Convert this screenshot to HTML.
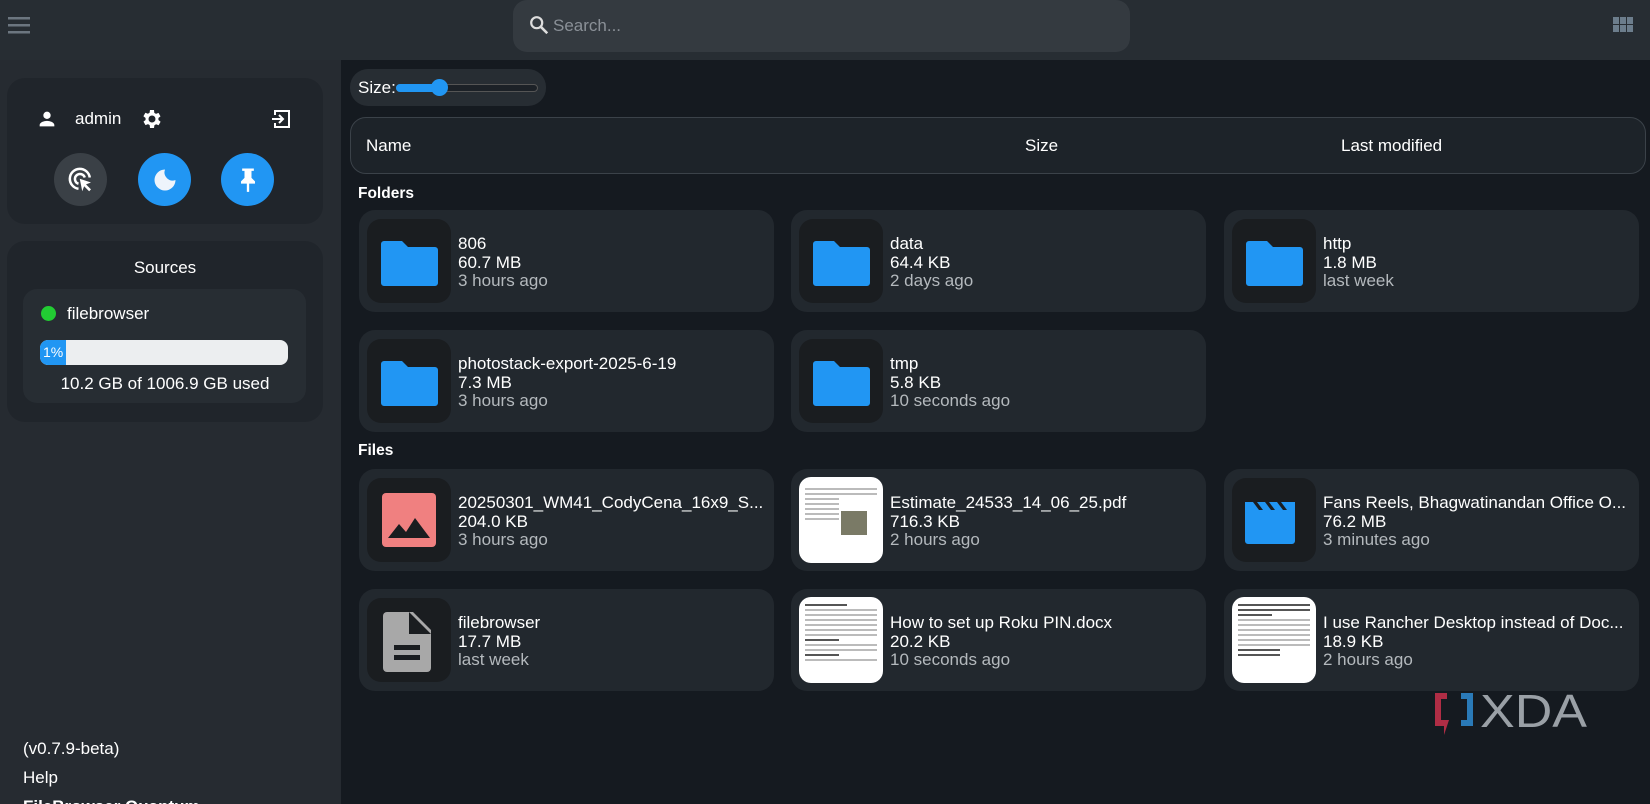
<!DOCTYPE html>
<html style="width:1650px;height:804px;overflow:hidden"><head><meta charset="utf-8"><style>
*{box-sizing:border-box;margin:0;padding:0}
body{width:1650px;height:804px;overflow:hidden;background:#151a20;font-family:"Liberation Sans",sans-serif;color:#fff;position:relative}
.abs{position:absolute}
#hdr{left:0;top:0;width:1650px;height:60px;background:#272d33}
#side{left:0;top:60px;width:341px;height:744px;background:#262b31}
.scard{background:#20252b;border-radius:18px}
.card{position:absolute;width:415px;height:102px;background:#22282e;border-radius:16px}
.ib{position:absolute;left:8px;top:9px;width:84px;height:84px;background:#1a1d20;border-radius:14px}
.tx{position:absolute;left:99px;top:25px;font-size:17px;line-height:18.5px;white-space:nowrap}
.tx .d{color:#b4b9bd}
.lbl{font-size:15.5px;font-weight:bold}
.thumb{position:absolute;left:8px;top:8px;width:84px;height:86px;background:#fff;border-radius:12px;overflow:hidden}
.ln{height:2px;background:#bbb;margin:3px 6px}
</style></head><body>
<div id="hdr" class="abs"></div>
<svg class="abs" style="left:8px;top:15px" width="22" height="20"><g fill="#6c7680"><rect y="2" width="22" height="2.5"/><rect y="9" width="22" height="2.5"/><rect y="16" width="22" height="2.5"/></g></svg>
<div class="abs" style="left:513px;top:0;width:617px;height:52px;background:#343a40;border-radius:14px"></div>
<svg class="abs" style="left:528px;top:14px" width="22" height="22" viewBox="0 0 24 24"><circle cx="9.5" cy="9.5" r="6" stroke="#ddd" stroke-width="2.4" fill="none"/><path d="M14 14l7 7" stroke="#ddd" stroke-width="2.8"/></svg>
<div class="abs" style="left:553px;top:16px;font-size:17px;color:#8a9097">Search...</div>
<svg class="abs" style="left:1613px;top:17px" width="20" height="16"><g fill="#6c7d8c"><rect x="0" y="0" width="6" height="7"/><rect x="7" y="0" width="6" height="7"/><rect x="14" y="0" width="6" height="7"/><rect x="0" y="8" width="6" height="7"/><rect x="7" y="8" width="6" height="7"/><rect x="14" y="8" width="6" height="7"/></g></svg>

<div id="side" class="abs"></div>
<div class="abs scard" style="left:7px;top:78px;width:316px;height:146px"></div>
<svg class="abs" style="left:36px;top:108px" width="22" height="22" viewBox="0 0 24 24"><path fill="#fff" d="M12 12a4 4 0 1 0 0-8 4 4 0 0 0 0 8zm0 2c-3 0-8 1.5-8 4.5V20h16v-1.5c0-3-5-4.5-8-4.5z"/></svg>
<div class="abs" style="left:75px;top:109px;font-size:17px">admin</div>
<svg class="abs" style="left:140px;top:107px" width="24" height="24" viewBox="0 0 24 24"><path fill="#fff" d="M19.4 13a7.5 7.5 0 0 0 0-2l2.1-1.6-2-3.5-2.5 1a7 7 0 0 0-1.7-1L15 3h-4l-.4 2.7a7 7 0 0 0-1.7 1l-2.5-1-2 3.5L6.6 11a7.5 7.5 0 0 0 0 2l-2.1 1.6 2 3.5 2.5-1a7 7 0 0 0 1.7 1L11 21h4l.4-2.7a7 7 0 0 0 1.7-1l2.5 1 2-3.5zM13 15.5a3.5 3.5 0 1 1 0-7 3.5 3.5 0 0 1 0 7z" transform="translate(-1 0)"/></svg>
<svg class="abs" style="left:269px;top:107px" width="24" height="24" viewBox="0 0 24 24"><path fill="none" stroke="#fff" stroke-width="2" d="M6 8V4h14v16H6v-4M3 12h11M10 8l4 4-4 4"/></svg>
<div class="abs" style="left:54px;top:153px;width:53px;height:53px;border-radius:50%;background:#3a4046"></div>
<svg class="abs" style="left:66px;top:165px" width="30" height="30" viewBox="0 0 24 24"><path fill="none" stroke="#fff" stroke-width="2" d="M10 19a8 8 0 1 1 9-9M10 15a4 4 0 1 1 5-5"/><path fill="#fff" d="M11 11l9 3-4 1.5 4 4-1.5 1.5-4-4L13 21z"/></svg>
<div class="abs" style="left:138px;top:153px;width:53px;height:53px;border-radius:50%;background:#2196f3"></div>
<svg class="abs" style="left:151px;top:166px" width="28" height="28" viewBox="0 0 24 24"><path fill="#eef4fb" d="M12 3a9 9 0 1 0 9 9 7 7 0 0 1-9-9z"/></svg>
<div class="abs" style="left:221px;top:153px;width:53px;height:53px;border-radius:50%;background:#2196f3"></div>
<svg class="abs" style="left:234px;top:164px" width="28" height="30" viewBox="0 0 24 24"><path fill="#fff" d="M7 3h10v2h-2v6l3 3v2h-5v7h-2v-7H6v-2l3-3V5H7z"/></svg>

<div class="abs scard" style="left:7px;top:241px;width:316px;height:181px"></div>
<div class="abs" style="left:0;top:258px;width:330px;text-align:center;font-size:17px">Sources</div>
<div class="abs" style="left:23px;top:289px;width:283px;height:114px;background:#272d33;border-radius:14px"></div>
<div class="abs" style="left:41px;top:306px;width:15px;height:15px;border-radius:50%;background:#22cc33"></div>
<div class="abs" style="left:67px;top:304px;font-size:17px">filebrowser</div>
<div class="abs" style="left:40px;top:340px;width:248px;height:25px;background:#eceef0;border-radius:8px;overflow:hidden"><div style="width:26px;height:25px;background:#2196f3;font-size:14px;line-height:25px;padding-left:3px">1%</div></div>
<div class="abs" style="left:0;top:374px;width:330px;text-align:center;font-size:17px">10.2 GB of 1006.9 GB used</div>
<div class="abs" style="left:23px;top:734px;font-size:17px;line-height:29px">(v0.7.9-beta)<br>Help<br><b>FileBrowser Quantum</b></div>

<div class="abs" style="left:350px;top:69px;width:196px;height:37px;background:#272d33;border-radius:18px"></div>
<div class="abs" style="left:358px;top:78px;font-size:17px">Size:</div>
<div class="abs" style="left:396px;top:84px;width:142px;height:8px;border-radius:4px;background:#1c2127;border:1px solid #555"></div>
<div class="abs" style="left:396px;top:84px;width:44px;height:8px;border-radius:4px;background:#2196f3"></div>
<div class="abs" style="left:431px;top:79px;width:17px;height:17px;border-radius:50%;background:#2196f3"></div>

<div class="abs" style="left:350px;top:117px;width:1296px;height:57px;border:1px solid #3b4249;border-radius:16px;background:#1d2329"></div>
<div class="abs" style="left:366px;top:136px;font-size:17px">Name</div>
<div class="abs" style="left:1025px;top:136px;font-size:17px">Size</div>
<div class="abs" style="left:1341px;top:136px;font-size:17px">Last modified</div>

<div class="abs lbl" style="left:358px;top:185px">Folders</div>
<div class="abs lbl" style="left:358px;top:442px">Files</div>

<div class="card" style="left:359px;top:210px"><div class="ib"><svg style="position:absolute;left:13px;top:20px" width="59" height="48" viewBox="0 0 59 48"><path fill="#2196f3" d="M4 2h18l6 6h27a3 3 0 0 1 3 3v33a3 3 0 0 1-3 3H4a3 3 0 0 1-3-3V5a3 3 0 0 1 3-3z"/></svg></div><div class="tx">806<br>60.7 MB<br><span class="d">3 hours ago</span></div></div>
<div class="card" style="left:791px;top:210px"><div class="ib"><svg style="position:absolute;left:13px;top:20px" width="59" height="48" viewBox="0 0 59 48"><path fill="#2196f3" d="M4 2h18l6 6h27a3 3 0 0 1 3 3v33a3 3 0 0 1-3 3H4a3 3 0 0 1-3-3V5a3 3 0 0 1 3-3z"/></svg></div><div class="tx">data<br>64.4 KB<br><span class="d">2 days ago</span></div></div>
<div class="card" style="left:1224px;top:210px"><div class="ib"><svg style="position:absolute;left:13px;top:20px" width="59" height="48" viewBox="0 0 59 48"><path fill="#2196f3" d="M4 2h18l6 6h27a3 3 0 0 1 3 3v33a3 3 0 0 1-3 3H4a3 3 0 0 1-3-3V5a3 3 0 0 1 3-3z"/></svg></div><div class="tx">http<br>1.8 MB<br><span class="d">last week</span></div></div>
<div class="card" style="left:359px;top:330px"><div class="ib"><svg style="position:absolute;left:13px;top:20px" width="59" height="48" viewBox="0 0 59 48"><path fill="#2196f3" d="M4 2h18l6 6h27a3 3 0 0 1 3 3v33a3 3 0 0 1-3 3H4a3 3 0 0 1-3-3V5a3 3 0 0 1 3-3z"/></svg></div><div class="tx">photostack-export-2025-6-19<br>7.3 MB<br><span class="d">3 hours ago</span></div></div>
<div class="card" style="left:791px;top:330px"><div class="ib"><svg style="position:absolute;left:13px;top:20px" width="59" height="48" viewBox="0 0 59 48"><path fill="#2196f3" d="M4 2h18l6 6h27a3 3 0 0 1 3 3v33a3 3 0 0 1-3 3H4a3 3 0 0 1-3-3V5a3 3 0 0 1 3-3z"/></svg></div><div class="tx">tmp<br>5.8 KB<br><span class="d">10 seconds ago</span></div></div>

<div class="card" style="left:359px;top:469px"><div class="ib"><svg style="position:absolute;left:15px;top:15px" width="54" height="54" viewBox="0 0 54 54"><rect width="54" height="54" rx="4" fill="#f08080"/><path fill="#1a1d20" d="M6 45l11-14 7 8 9-14 15 20z"/></svg></div><div class="tx">20250301_WM41_CodyCena_16x9_S...<br>204.0 KB<br><span class="d">3 hours ago</span></div></div>
<div class="card" style="left:791px;top:469px"><div class="thumb"><div style="height:8px"></div><div class="ln"></div><div class="ln"></div><div class="ln" style="width:40%"></div><div class="ln" style="width:40%"></div><div class="ln" style="width:40%"></div><div class="ln" style="width:40%"></div><div class="ln" style="width:40%"></div><div style="position:absolute;left:42px;top:34px;width:26px;height:24px;background:#7a7a66"></div></div><div class="tx">Estimate_24533_14_06_25.pdf<br>716.3 KB<br><span class="d">2 hours ago</span></div></div>
<div class="card" style="left:1224px;top:469px"><div class="ib"><svg style="position:absolute;left:13px;top:20px" width="60" height="46" viewBox="0 0 60 46"><path fill="#2196f3" d="M0 4h8l6 8h4l-6-8h8l6 8h4l-6-8h8l6 8h4l-6-8h14v39a3 3 0 0 1-3 3H3a3 3 0 0 1-3-3z"/></svg></div><div class="tx">Fans Reels, Bhagwatinandan Office O...<br>76.2 MB<br><span class="d">3 minutes ago</span></div></div>

<div class="card" style="left:359px;top:589px"><div class="ib"><svg style="position:absolute;left:16px;top:14px" width="48" height="60" viewBox="0 0 48 60"><path fill="#a8a8a8" d="M4 0h26l18 18v38a4 4 0 0 1-4 4H4a4 4 0 0 1-4-4V4a4 4 0 0 1 4-4z"/><path fill="#1a1d20" d="M26 0v22h22zM11 33h26v5H11zM11 43h26v5H11z"/></svg></div><div class="tx">filebrowser<br>17.7 MB<br><span class="d">last week</span></div></div>
<div class="card" style="left:791px;top:589px"><div class="thumb"><div style="height:4px"></div><div class="ln" style="background:#555;width:50%"></div><div class="ln"></div><div class="ln"></div><div class="ln"></div><div class="ln"></div><div class="ln"></div><div class="ln"></div><div class="ln" style="width:40%;background:#555"></div><div class="ln"></div><div class="ln"></div><div class="ln" style="width:40%;background:#555"></div><div class="ln"></div></div><div class="tx">How to set up Roku PIN.docx<br>20.2 KB<br><span class="d">10 seconds ago</span></div></div>
<div class="card" style="left:1224px;top:589px"><div class="thumb"><div style="height:4px"></div><div class="ln" style="background:#555"></div><div class="ln" style="background:#555"></div><div class="ln" style="width:40%;background:#555"></div><div class="ln"></div><div class="ln"></div><div class="ln"></div><div class="ln"></div><div class="ln"></div><div class="ln"></div><div class="ln" style="width:50%;background:#555"></div><div class="ln" style="width:50%;background:#555"></div></div><div class="tx">I use Rancher Desktop instead of Doc...<br>18.9 KB<br><span class="d">2 hours ago</span></div></div>

<svg class="abs" style="left:1434px;top:692px" width="156" height="48" viewBox="0 0 156 48"><path fill="#b02d45" d="M1 1h12v6H7v21h8l-5 15V34H1z"/><path fill="#2a7ab8" d="M27 1h12v33H27v-6h6V7h-6z"/><text x="46" y="35" font-family="Liberation Sans,sans-serif" font-size="46" fill="#9aa0a6" textLength="107" lengthAdjust="spacingAndGlyphs">XDA</text></svg>
</body></html>
